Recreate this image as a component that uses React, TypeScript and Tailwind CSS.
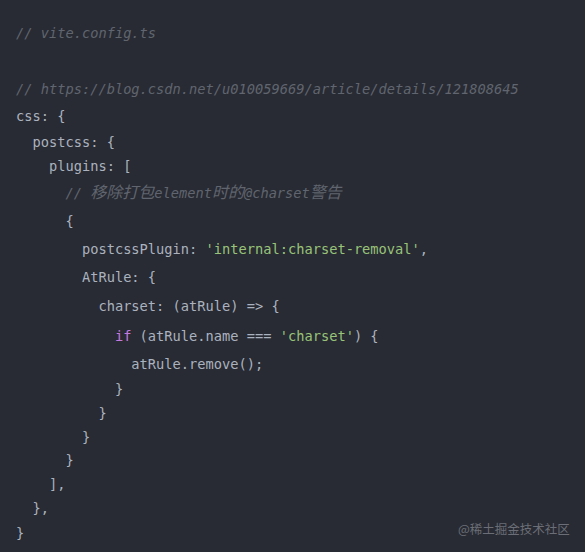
import React from "react";

const mono = { fontFamily: '"DejaVu Sans Mono", "Noto Sans CJK SC", monospace' };

function Cm({ children }: { children: React.ReactNode }) {
  return <span className="italic text-[#60656f]">{children}</span>;
}
function Cjk({ children }: { children: React.ReactNode }) {
  return <span className="text-[16px]">{children}</span>;
}
function Str({ children }: { children: React.ReactNode }) {
  return <span className="text-[#98c379]">{children}</span>;
}
function Kw({ children }: { children: React.ReactNode }) {
  return <span className="text-[#c678dd]">{children}</span>;
}

export default function App() {
  const lines: { h: string; c: React.ReactNode }[] = [
    { h: "h-[28px]", c: <Cm>// vite.config.ts</Cm> },
    { h: "h-[28px]", c: "" },
    { h: "h-[28px]", c: <Cm>// https://blog.csdn.net/u010059669/article/details/121808645</Cm> },
    { h: "h-[27px]", c: "css: {" },
    { h: "h-[24px]", c: "  postcss: {" },
    { h: "h-[25px]", c: "    plugins: [" },
    {
      h: "h-[28px]",
      c: (
        <>
          {"      "}
          <Cm>
            {"// "}
            <Cjk>移除打包</Cjk>element<Cjk>时的</Cjk>@charset<Cjk>警告</Cjk>
          </Cm>
        </>
      ),
    },
    { h: "h-[28px]", c: "      {" },
    {
      h: "h-[28px]",
      c: (
        <>
          {"        postcssPlugin: "}
          <Str>'internal:charset-removal'</Str>,
        </>
      ),
    },
    { h: "h-[28px]", c: "        AtRule: {" },
    { h: "h-[30px]", c: "          charset: (atRule) => {" },
    {
      h: "h-[30px]",
      c: (
        <>
          {"            "}
          <Kw>if</Kw>
          {" (atRule.name === "}
          <Str>'charset'</Str>
          {") {"}
        </>
      ),
    },
    { h: "h-[26px]", c: "              atRule.remove();" },
    { h: "h-[24px]", c: "            }" },
    { h: "h-[24px]", c: "          }" },
    { h: "h-[24px]", c: "        }" },
    { h: "h-[23px]", c: "      }" },
    { h: "h-[24px]", c: "    ]," },
    { h: "h-[25px]", c: "  }," },
    { h: "h-[24px]", c: "}" },
  ];

  return (
    <div className="relative w-[585px] h-[552px] overflow-hidden bg-[#282b33] pl-[16px] pt-[19px]" style={mono}>
      <div className="flex flex-col text-[13.7px] text-[#abb2bf]">
        {lines.map((l, i) => (
          <div key={i} className={`${l.h} flex items-center`}>
            <span className="whitespace-pre">{l.c}</span>
          </div>
        ))}
      </div>
      <div
        className="absolute left-[458px] top-[520px] text-[12.5px] leading-[18px] text-[#6b6e76]"
        style={{ fontFamily: '"Noto Sans CJK SC", "Noto Sans", sans-serif' }}
      >
        @稀土掘金技术社区
      </div>
    </div>
  );
}
